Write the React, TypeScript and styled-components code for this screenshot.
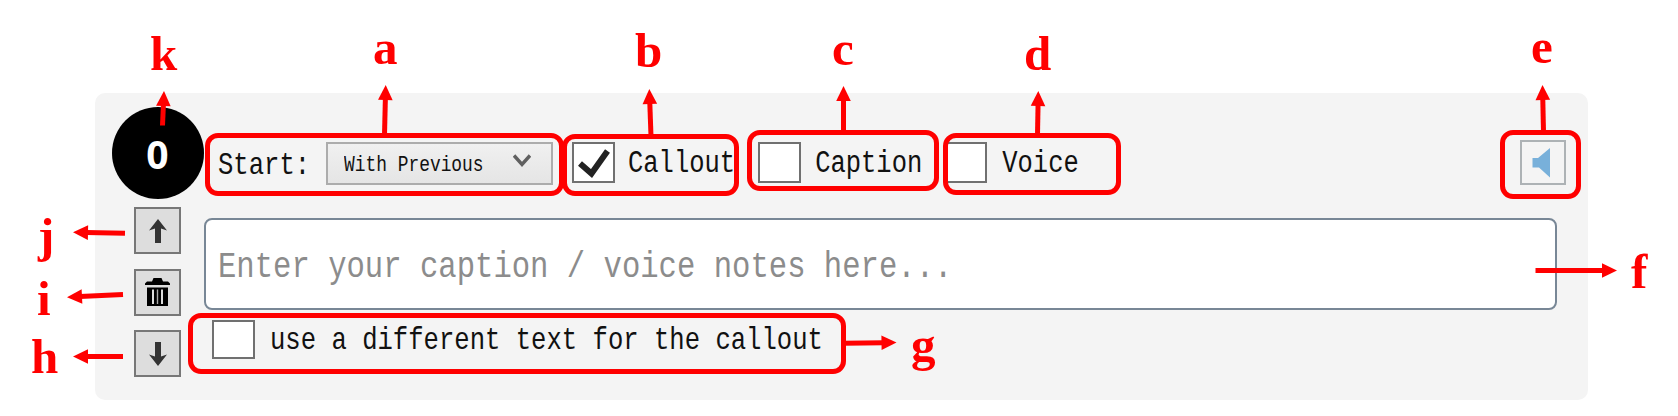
import React from "react";
import styled, { createGlobalStyle } from "styled-components";

const GlobalStyle = createGlobalStyle`
  body { margin: 0; background: #fff; }
  * { box-sizing: border-box; }
`;

const Page = styled.main`
  position: relative;
  width: 1678px;
  height: 416px;
  padding: 93px 90px 16px 95px;
  overflow: hidden;
`;

const Panel = styled.section`
  display: flex;
  height: 307px;
  padding: 14px 31px 0 16px;
  border-radius: 10px;
  background: #f4f4f4;
`;

const SideColumn = styled.div`
  display: flex;
  flex-direction: column;
  align-items: center;
  width: 93px;
`;

const StepNumber = styled.div`
  width: 92px;
  height: 92px;
  margin-bottom: 8.4px;
  border-radius: 50%;
  background: #000;
  color: #fff;
  font: 700 39px/93px "Open Sans", sans-serif;
  text-align: center;
`;

const SideButton = styled.button`
  display: grid;
  place-items: center;
  width: 47px;
  height: 47px;
  margin: 0 0 14.4px;
  padding: 0;
  border: 2px solid #777;
  background: #ddd;
`;

const MainColumn = styled.div`
  display: flex;
  flex: 1;
  flex-direction: column;
`;

const Toolbar = styled.div`
  display: flex;
  align-items: flex-start;
  height: 111px;
  padding: 33px 0 0 14px;
`;

const MonoText = styled.span<{ $size: number; $color?: string; $drop?: number }>`
  display: block;
  padding-top: ${(p) => p.$drop ?? 0}px;
  color: ${(p) => p.$color ?? "#111"};
  font-family: "Liberation Mono", monospace;
  font-size: ${(p) => p.$size}px;
  line-height: 32px;
  white-space: pre;
  transform: scaleY(1.2);
  transform-origin: 0 100%;
`;

const StartLabel = styled.div`
  width: 108px;
`;

const Select = styled.div`
  display: flex;
  justify-content: space-between;
  width: 227px;
  height: 43px;
  margin-top: 2px;
  padding: 0 20px 0 16px;
  border: 2px solid #acacac;
  background: linear-gradient(#f0f0f0, #e5e5e5);
`;

const Chevron = styled.svg`
  margin-top: 9px;
`;

const CheckOption = styled.label<{ $left: number; $gap: number }>`
  display: flex;
  gap: ${(p) => p.$gap}px;
  margin-left: ${(p) => p.$left}px;
`;

const CheckBox = styled.span<{ $height?: number }>`
  display: grid;
  place-items: center;
  width: 43px;
  height: ${(p) => p.$height ?? 41}px;
  margin-top: 2px;
  border: 2px solid #707070;
  background: #fff;
`;

const SpeakerButton = styled.button`
  width: 46px;
  height: 45px;
  margin: 0 -9px 0 auto;
  padding: 0;
  border: 2px solid #adb2b5;
  background: #f4f4f4;
`;

const NotesField = styled.div`
  height: 92px;
  padding: 24px 12px;
  border: 2px solid #788796;
  border-radius: 8px;
  background: #fff;
`;

const CalloutRow = styled.div`
  display: flex;
  padding-top: 8px;
`;

const Outline = styled.div<{ $x: number; $y: number; $w: number; $h: number }>`
  position: absolute;
  left: ${(p) => p.$x}px;
  top: ${(p) => p.$y}px;
  width: ${(p) => p.$w}px;
  height: ${(p) => p.$h}px;
  border: 5px solid #f00;
  border-radius: 13px;
`;

const Letter = styled.span<{ $x: number; $baseline: number }>`
  position: absolute;
  left: ${(p) => p.$x}px;
  top: ${(p) => p.$baseline - 41}px;
  color: #f00;
  font: 700 49px/50px "Liberation Serif", serif;
`;

const ArrowLayer = styled.svg`
  position: absolute;
  inset: 0;
`;

const outlines = [
  [205, 133, 359, 63],
  [562, 134, 177, 62],
  [747, 130, 192, 61],
  [943, 133, 178, 62],
  [1500, 130, 81, 69],
  [188, 313, 658, 61],
];

const letters: [string, number, number][] = [
  ["k", 150, 70], ["a", 373, 64], ["b", 635, 67], ["c", 832, 65],
  ["d", 1024, 70], ["e", 1531, 63], ["f", 1631, 288], ["g", 911, 361],
  ["h", 31, 373], ["i", 37, 315], ["j", 38, 252],
];

// Each arrow runs from its tail to the point of its head.
const arrows = [
  [162.5, 125.5, 164, 91],
  [384.5, 135, 385.7, 85],
  [651, 136, 649.3, 89],
  [843.5, 132, 843.5, 86],
  [1037.5, 135, 1038.3, 91],
  [1543.5, 132, 1542.5, 85],
  [1535.5, 270.5, 1617, 270.5],
  [844, 343.3, 896.5, 342.5],
  [123, 356.5, 73, 356.5],
  [123, 294.5, 67, 297.2],
  [125, 233.3, 73, 232.3],
];

function Arrow({ ends }: { ends: number[] }) {
  const [x1, y1, x2, y2] = ends;
  const length = Math.hypot(x2 - x1, y2 - y1);
  const angle = (Math.atan2(y2 - y1, x2 - x1) * 180) / Math.PI;
  return (
    <g transform={`translate(${x1} ${y1}) rotate(${angle})`} fill="#f00">
      <rect x="0" y="-2.5" width={length - 13} height="5" />
      <path d={`M${length} 0l-15-7.3v14.6z`} />
    </g>
  );
}

function ArrowIcon({ down = false }: { down?: boolean }) {
  return (
    <svg width="20" height="26" viewBox="0 0 20 26" fill="#333">
      <path
        d="M10 1L19 12.5L13 10.5V25H7V10.5L1 12.5Z"
        transform={down ? "rotate(180 10 13)" : undefined}
      />
    </svg>
  );
}

function TrashIcon() {
  return (
    <svg width="27" height="30" viewBox="0 0 27 30">
      <path fill="#000" d="M1 8V6.5L3 4.5H8L9.5 1H17.5L19 4.5H24L26 6.5V8ZM3 10.5H24V29H3Z" />
      <path stroke="#ddd" strokeWidth="2" d="M9 12.5V27M18 12.5V27" />
      <path stroke="#aaa" strokeWidth="1.4" d="M13.5 12.5V27" />
    </svg>
  );
}

export default function App() {
  return (
    <Page>
      <GlobalStyle />
      <Panel>
        <SideColumn>
          <StepNumber>0</StepNumber>
          <SideButton aria-label="Move up"><ArrowIcon /></SideButton>
          <SideButton aria-label="Delete"><TrashIcon /></SideButton>
          <SideButton aria-label="Move down"><ArrowIcon down /></SideButton>
        </SideColumn>
        <MainColumn>
          <Toolbar>
            <StartLabel><MonoText $size={25.6} $drop={14}>Start:</MonoText></StartLabel>
            <Select>
              <MonoText $size={17.9} $drop={8}>With Previous</MonoText>
              <Chevron width="18" height="15" fill="none" stroke="#606060" strokeWidth="3.4">
                <path d="M1 2.5L9 11.5L17 2.5" />
              </Chevron>
            </Select>
            <CheckOption $left={19} $gap={13}>
              <CheckBox>
                <svg width="34" height="32" fill="none" stroke="#222" strokeWidth="6">
                  <path d="M3 16.5L14.5 26.5L30.5 4" />
                </svg>
              </CheckBox>
              <MonoText $size={25.5} $drop={12}>Callout</MonoText>
            </CheckOption>
            <CheckOption $left={23} $gap={14}>
              <CheckBox />
              <MonoText $size={25.5} $drop={12}>Caption</MonoText>
            </CheckOption>
            <CheckOption $left={22} $gap={15}>
              <CheckBox />
              <MonoText $size={25.5} $drop={12}>Voice</MonoText>
            </CheckOption>
            <SpeakerButton aria-label="Play voice">
              <svg width="42" height="41" viewBox="0 0 42 41">
                <path fill="#78b0da" d="M10.5 16H16L28 6V35.5L17 25.5H10.5Z" />
              </svg>
            </SpeakerButton>
          </Toolbar>
          <NotesField>
            <MonoText $size={30.6} $color="#8c8c8c" $drop={11}>
              Enter your caption / voice notes here...
            </MonoText>
          </NotesField>
          <CalloutRow>
            <CheckOption $left={8} $gap={15}>
              <CheckBox $height={39} />
              <MonoText $size={25.6} $drop={11}>use a different text for the callout</MonoText>
            </CheckOption>
          </CalloutRow>
        </MainColumn>
      </Panel>
      {outlines.map(([x, y, w, h]) => (
        <Outline key={x} $x={x} $y={y} $w={w} $h={h} />
      ))}
      <ArrowLayer width="1678" height="416">
        {arrows.map((ends) => <Arrow key={ends.join()} ends={ends} />)}
      </ArrowLayer>
      {letters.map(([letter, x, baseline]) => (
        <Letter key={letter} $x={x} $baseline={baseline}>{letter}</Letter>
      ))}
    </Page>
  );
}
